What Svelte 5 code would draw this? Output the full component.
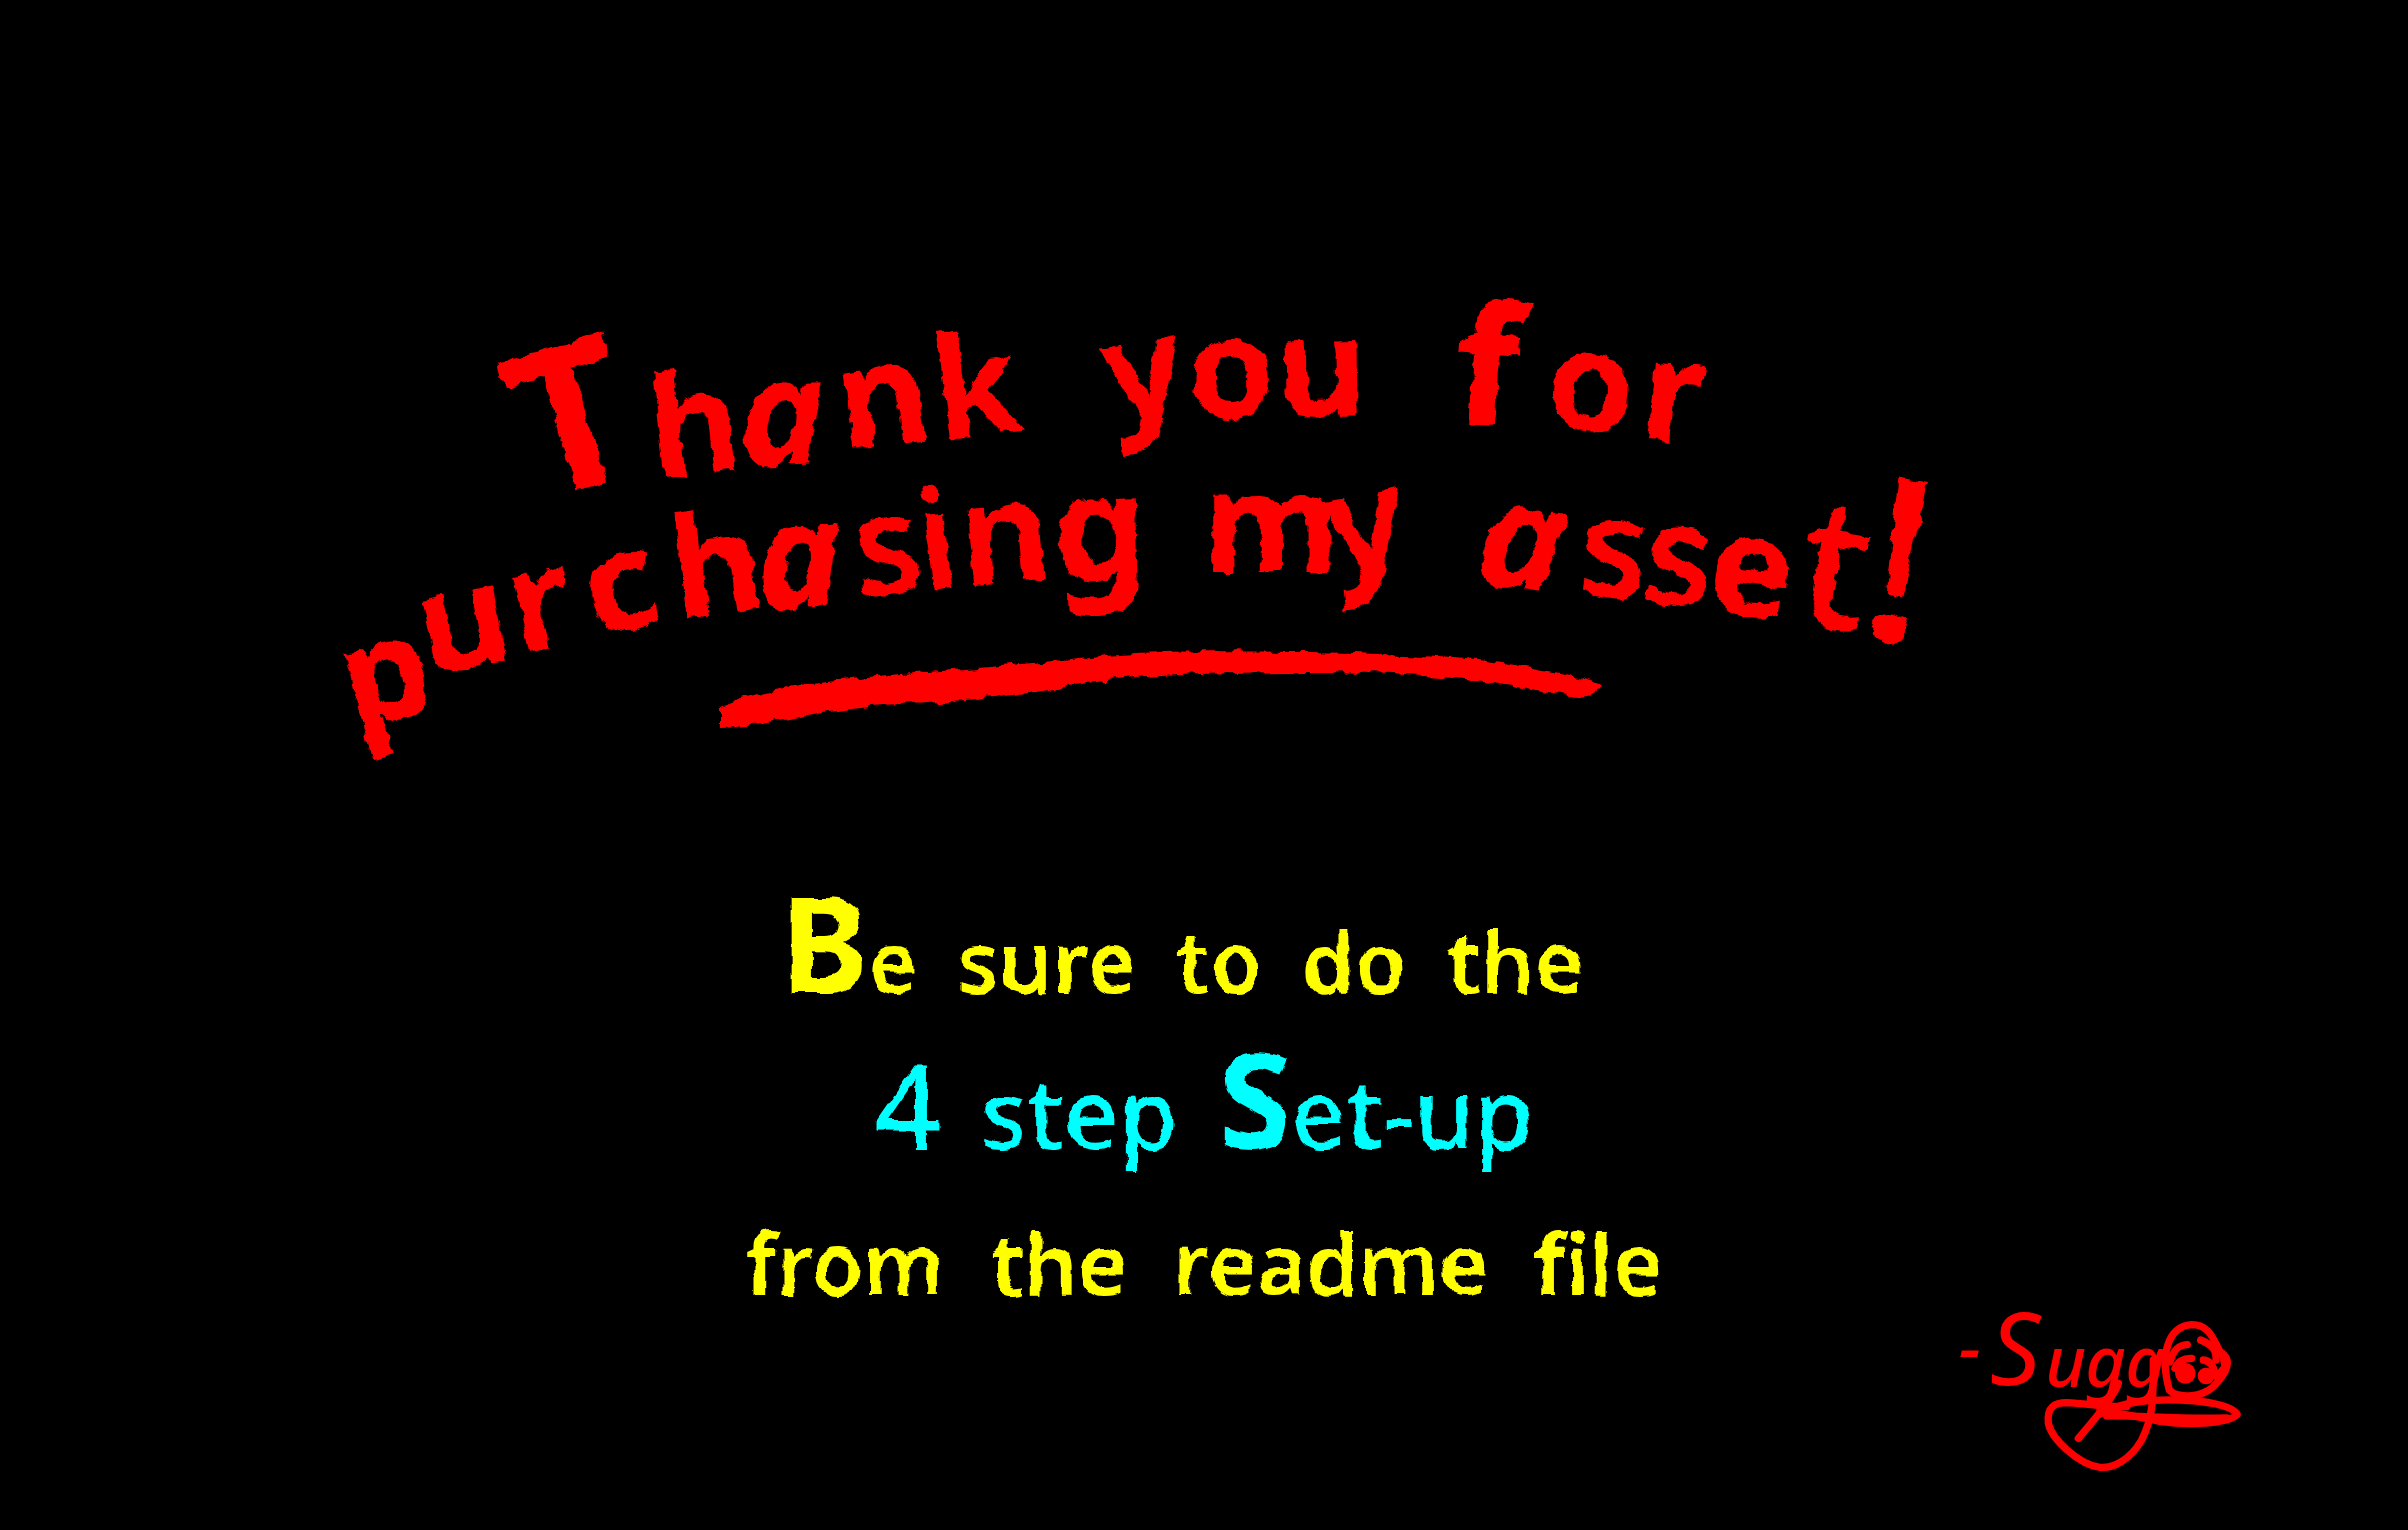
<script>
  // Arched lettering: character, baseline origin, tilt in degrees and optional style
  const title = [
    [
      ['T', 536, 504, -17, 'initial'],
      ['h', 654, 478, -6],
      ['a', 740, 466, -2, 'round'],
      ['n', 844, 450, -8],
      ['k', 939, 440, -7]
    ],
    [
      ['y', 1112, 424, -10],
      ['o', 1190, 420, -3],
      ['u', 1277, 417, -1]
    ],
    [
      ['f', 1452, 424, 4, 'tall'],
      ['o', 1544, 428, 4],
      ['r', 1638, 438, 5]
    ],
    [
      ['p', 354, 730, -14],
      ['u', 428, 678, -12],
      ['r', 519, 654, -12],
      ['c', 594, 638, -11],
      ['h', 678, 620, -8],
      ['a', 758, 610, -4, 'round'],
      ['s', 858, 598, -6, 'thin'],
      ['i', 924, 592, -8, 'thin'],
      ['n', 963, 586, -5],
      ['g', 1055, 582, -2, 'loop']
    ],
    [
      ['m', 1203, 573, 0],
      ['y', 1334, 578, -10]
    ],
    [
      ['a', 1472, 583, 8, 'round'],
      ['s', 1576, 594, 5, 'thin'],
      ['s', 1640, 602, 6, 'thin'],
      ['e', 1704, 610, 8],
      ['t', 1792, 622, 9, 'cross'],
      ['!', 1856, 638, 9, 'bang']
    ]
  ];
</script>

<svelte:head>
  <title>Thank you</title>
</svelte:head>

<main>
  <h1>
    <svg class="title" viewBox="0 0 2408 885">
      <defs>
        <filter id="rough" x="-2%" y="-2%" width="104%" height="104%">
          <feTurbulence type="fractalNoise" baseFrequency="0.06" numOctaves="3" seed="4" result="noise" />
          <feDisplacementMap in="SourceGraphic" in2="noise" scale="10" xChannelSelector="R" yChannelSelector="G" />
        </filter>
        <filter id="rough-small" x="-2%" y="-2%" width="104%" height="104%">
          <feTurbulence type="fractalNoise" baseFrequency="0.06" numOctaves="2" seed="7" result="noise" />
          <feDisplacementMap in="SourceGraphic" in2="noise" scale="7" xChannelSelector="R" yChannelSelector="G" />
        </filter>
      </defs>
      <g filter="url(#rough)">
        {#each title as word}
          <text>{#each word as [char, x, y, tilt, style]}<tspan class={style} {x} {y} rotate={tilt}>{char}</tspan>{/each}</text>
        {/each}
        <path
          d="M721 706 C760 690 830 680 900 674 C980 668 1030 664 1100 656 C1170 649 1250 652 1310 652
             C1400 654 1460 657 1510 664 C1550 672 1590 676 1600 686 C1600 693 1590 698 1580 696
             C1540 693 1520 683 1453 678 C1400 674 1360 672 1310 672 C1230 672 1150 674 1080 684
             C1010 699 930 702 870 707 C810 713 770 725 721 728 Z"
        />
      </g>
    </svg>
  </h1>

  <section>
    <p class="opening"><span><b>B</b>e</span> <span>sure</span> <span>to</span> <span>do</span> <span>the</span></p>
    <p class="accent"><span><i>4</i></span> <span>step</span> <span><b>S</b>et-up</span></p>
    <p><span>from</span> <span>the</span> <span>readme</span> <span>file</span></p>
  </section>

  <footer>
    <svg class="signature" viewBox="0 0 960 600">
      <text><tspan x="56" y="250">-</tspan><tspan class="lead" x="150" y="285">S</tspan><tspan x="316" y="290">u</tspan><tspan x="436" y="290">g</tspan><tspan x="556" y="290">g</tspan></text>
      <g class="flourish">
        <path d="M535 280 C528 310 480 370 415 445" />
        <path d="M640 210 C640 330 640 380 605 450 C570 510 520 535 480 532 C420 525 335 450 325 400 C320 350 345 338 380 338 C450 342 490 350 560 350" />
        <path d="M480 372 C560 330 640 328 720 330 C790 332 880 345 892 374 C860 404 740 405 660 394 C600 380 540 372 480 360" />
        <path d="M500 378 C600 376 700 388 860 384" />
        <path d="M688 300 C660 200 680 110 755 104 C810 104 820 150 840 185 C880 210 860 250 820 290 C780 325 710 325 688 300" />
        <path d="M690 215 C700 180 715 165 742 164 M782 150 C820 165 830 185 828 210" />
        <path d="M705 235 C715 210 735 205 755 205 M790 210 C810 212 820 225 824 250" />
        <circle cx="736" cy="250" r="20" />
        <circle cx="798" cy="258" r="14" />
        <path d="M846 190 L856 230 L830 260" />
      </g>
    </svg>
  </footer>
</main>

<style>
  :global(body) {
    margin: 0;
    background: #000;
  }

  main {
    display: grid;
    grid-template-columns: 1fr auto 1fr;
    grid-template-rows: auto 1fr;
    min-height: 100vh;
    color: #ff0;
    font-family: 'Noto Sans', 'Open Sans', sans-serif;
  }

  h1 {
    grid-column: 1 / -1;
    margin: 0;
  }

  svg {
    display: block;
    overflow: visible;
    fill: #f00;
  }

  .title {
    width: 100%;
    font-size: 140px;
    font-weight: 700;
  }

  .initial {
    font-size: 204px;
  }

  .tall {
    font-size: 168px;
  }

  .loop {
    font-size: 148px;
  }

  .cross {
    font-size: 180px;
    font-weight: 500;
  }

  .bang {
    font-size: 230px;
    font-weight: 500;
  }

  .thin {
    font-weight: 600;
  }

  .round {
    font-size: 148px;
    font-style: italic;
  }

  section {
    grid-column: 2;
    font-size: 84px;
    font-weight: 600;
    line-height: 151px;
    filter: url(#rough-small);
  }

  p {
    display: flex;
    justify-content: center;
    align-items: baseline;
    gap: 46px;
    margin: 0;
    white-space: nowrap;
  }

  .opening {
    padding-right: 44px;
    gap: 40px;
  }

  b {
    font-size: 132px;
    font-weight: 700;
    line-height: 0;
  }

  i {
    font-size: 116px;
    font-style: normal;
    font-weight: 500;
    line-height: 0;
  }

  .accent {
    gap: 40px;
    color: #0ff;
    font-size: 96px;
    font-weight: 500;
  }

  footer {
    grid-column: 3;
    align-self: end;
    justify-self: end;
    padding: 0 148px 40px 0;
  }

  .signature {
    width: 320px;
    font-size: 210px;
    font-style: italic;
    font-weight: 500;
  }

  .lead {
    font-size: 300px;
    font-weight: 400;
  }

  .flourish {
    fill: none;
    stroke: #f00;
    stroke-width: 22;
    stroke-linecap: round;
    stroke-linejoin: round;
  }

  circle {
    fill: #f00;
  }
</style>
